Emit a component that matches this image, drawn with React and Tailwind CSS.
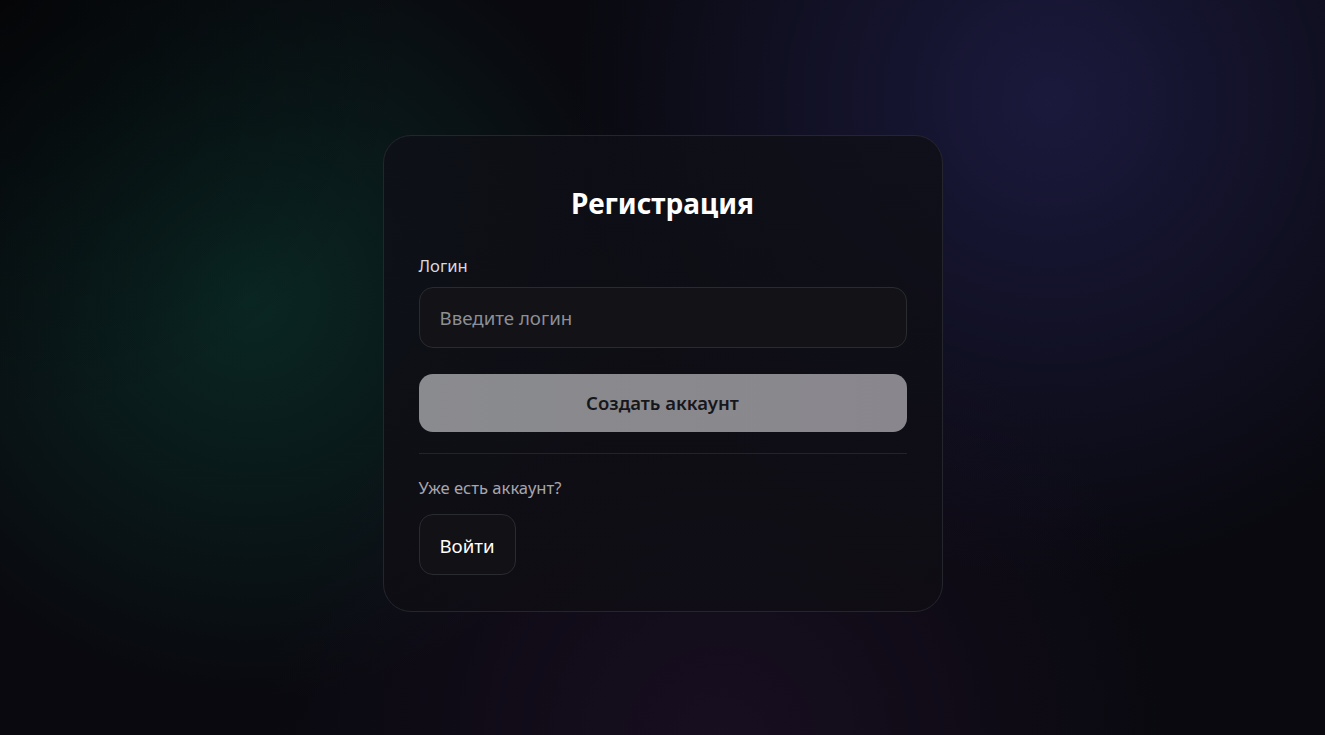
export default function App() {
  return (
    <div
      className="relative min-h-[735px] w-full overflow-hidden bg-[#09090f] flex justify-center pt-[135px]"
      style={{ fontFamily: "'Noto Sans', 'Open Sans', sans-serif" }}
    >
      {/* background glows */}
      <div className="pointer-events-none absolute inset-0 bg-[radial-gradient(circle_at_250px_300px,rgba(10,46,40,0.8),transparent_400px)]" />
      <div className="pointer-events-none absolute inset-0 bg-[radial-gradient(circle_at_1050px_100px,rgba(34,32,80,0.7),transparent_480px)]" />
      <div className="pointer-events-none absolute inset-0 bg-[radial-gradient(circle_at_720px_740px,rgba(34,18,44,0.6),transparent_460px)]" />
      <div className="pointer-events-none absolute inset-0 bg-[radial-gradient(circle_at_0px_0px,rgba(0,0,0,0.5),transparent_420px)]" />

      <div className="relative w-[560px] h-[477px] rounded-[28px] border border-[#25252d] bg-[linear-gradient(180deg,rgba(14,15,22,0.85),rgba(15,13,20,0.85))] px-[35px] pt-[50px] pb-9 flex flex-col">
        <h1 className="text-center text-[28px] leading-[34px] font-bold text-white">Регистрация</h1>

        <label className="mt-[34px] text-[16.6px] leading-6 text-[#d8d8de]">Логин</label>
        <input
          className="mt-[9px] h-[61px] w-full rounded-[14px] border border-[#2a2a31] bg-[#131317]/90 px-5 text-[18.7px] text-white placeholder:text-[#8d8f96] outline-none"
          placeholder="Введите логин"
        />

        <button className="mt-[26px] h-[59px] w-full rounded-[14px] bg-[linear-gradient(90deg,#8a8b8e,#89878d)] text-[18.5px] font-semibold text-[#16161b]">
          Создать аккаунт
        </button>

        <div className="mt-[21px] h-px w-full bg-[#23232a]" />

        <p className="mt-[22px] text-[16.6px] leading-6 text-[#a6a6ae]">Уже есть аккаунт?</p>

        <button className="mt-[14px] h-[61px] w-[97px] rounded-[14px] border border-[#2a2a31] bg-[#121216]/90 pt-[2px] text-[18.7px] text-white">
          Войти
        </button>
      </div>
    </div>
  );
}
